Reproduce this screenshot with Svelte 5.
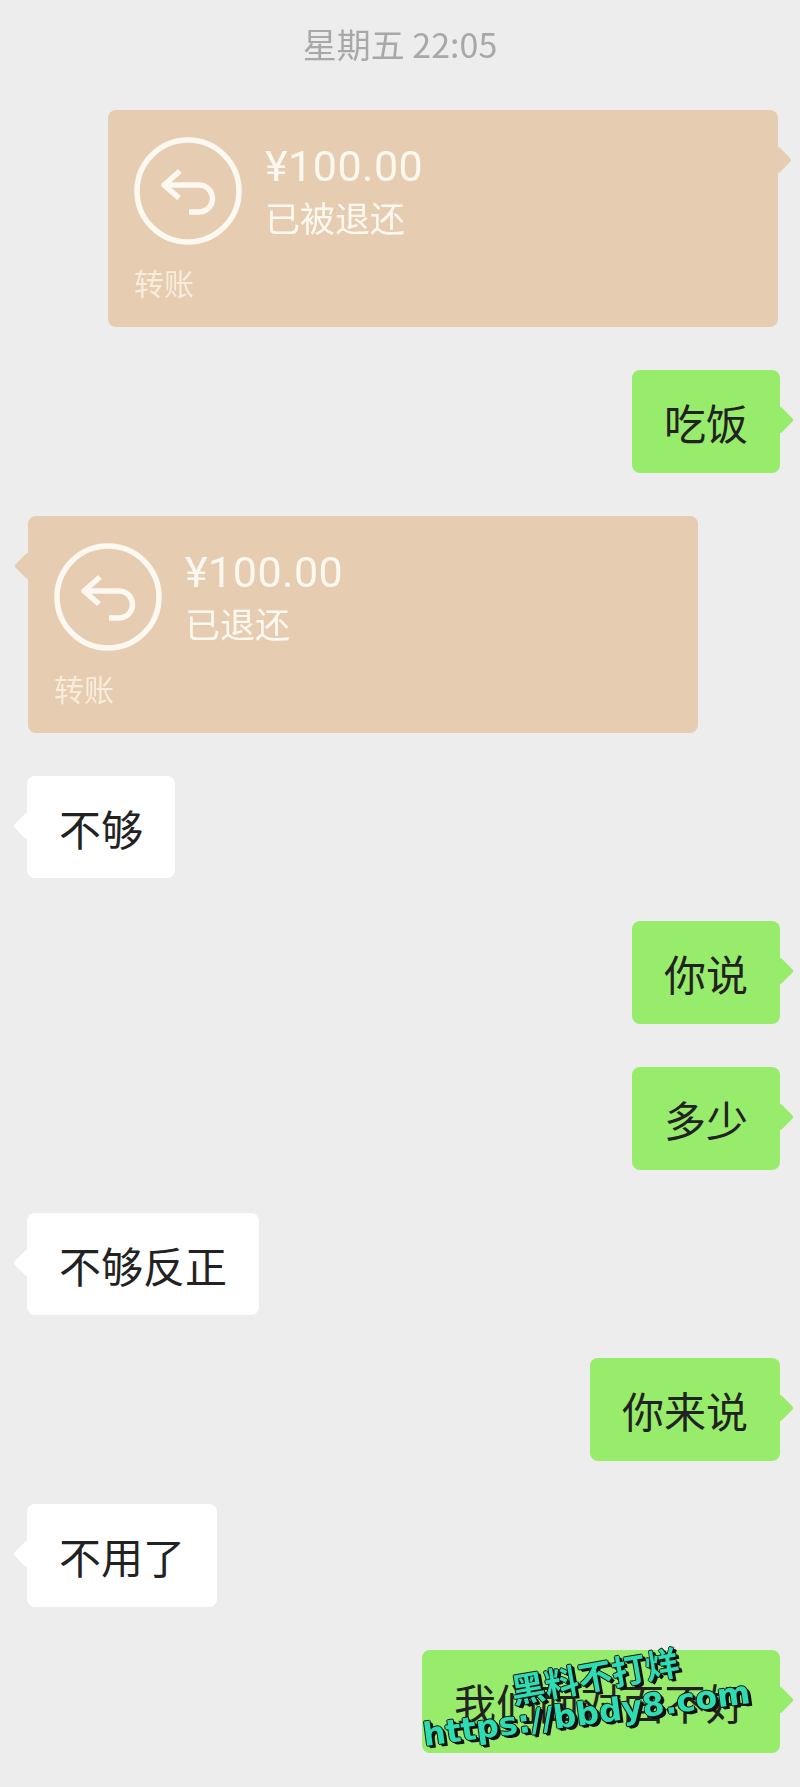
<script lang="ts">
  type Msg = { side: "left" | "right"; text: string };
  type Item = Msg | { side: "left" | "right"; refund: string };

  const items: Item[] = [
    { side: "right", refund: "已被退还" },
    { side: "right", text: "吃饭" },
    { side: "left", refund: "已退还" },
    { side: "left", text: "不够" },
    { side: "right", text: "你说" },
    { side: "right", text: "多少" },
    { side: "left", text: "不够反正" },
    { side: "right", text: "你来说" },
    { side: "left", text: "不用了" },
    { side: "right", text: "我们面对面不好" }
  ];
</script>

<div class="page">
  <div class="chat">
    <div class="time">星期五 22:05</div>
    <div class="list">
      {#each items as item}
        <div class="row {item.side}">
          {#if "refund" in item}
            <div class="bubble card">
              <div class="card-top">
                <svg class="icon" viewBox="0 0 108 108" fill="none" stroke="#fdf8f0" stroke-width="5.5">
                  <circle cx="54" cy="54" r="51" />
                  <path d="M46 34 L30 48 L45 61 M30 48 H65 A13.5 13.5 0 0 1 65 75 H55" stroke-linejoin="round" />
                </svg>
                <div class="card-info">
                  <div class="amount">¥100.00</div>
                  <div class="status">{item.refund}</div>
                </div>
              </div>
              <div class="card-label">转账</div>
            </div>
          {:else}
            <div class="bubble {item.side === 'right' ? 'green' : 'white'}">{item.text}</div>
          {/if}
        </div>
      {/each}
    </div>
  </div>

  <div class="mark mark-cn">黑料不打烊</div>
  <div class="mark mark-url">https://bbdy8.com</div>
</div>

<style>
  :global(body) {
    margin: 0;
    background: #ededed;
  }
  .page {
    position: relative;
    width: 800px;
    height: 1787px;
    overflow: hidden;
    background: #ededed;
    font-family: "Noto Sans CJK SC", sans-serif;
  }
  .chat {
    filter: blur(0.5px);
  }
  .time {
    height: 88px;
    padding-bottom: 22px;
    line-height: 88px;
    text-align: center;
    font-size: 34px;
    color: #a8a8a8;
  }
  .list {
    display: flex;
    flex-direction: column;
    gap: 43px;
  }
  .row {
    display: flex;
  }
  .row.left {
    justify-content: flex-start;
    padding-left: 27px;
  }
  .row.right {
    justify-content: flex-end;
    padding-right: 20px;
  }
  .bubble {
    position: relative;
    box-sizing: border-box;
    height: 102.7px;
    padding: 0 32px;
    display: flex;
    align-items: center;
    border-radius: 8px;
    font-size: 42px;
    color: #222;
  }
  .bubble::after {
    content: "";
    position: absolute;
    top: 40px;
    width: 20px;
    height: 20px;
    border-radius: 3px;
    background: inherit;
    transform: rotate(45deg);
  }
  .left .bubble::after {
    left: -10px;
  }
  .right .bubble::after {
    right: -10px;
  }
  .white {
    background: #fff;
  }
  .green {
    background: #98ec6b;
  }
  .card {
    width: 670px;
    height: 217px;
    padding: 27px 26px 0;
    display: block;
    background: #e6cdb1;
    color: #fdf8f0;
  }
  .right .card {
    margin-right: 2px;
  }
  .left .card {
    margin-left: 1px;
  }
  .card-top {
    display: flex;
    gap: 23px;
  }
  .icon {
    width: 108px;
    height: 108px;
    flex: none;
  }
  .card-info {
    padding-top: 2px;
  }
  .amount {
    font-family: Roboto, sans-serif;
    font-size: 43px;
    line-height: 55px;
    letter-spacing: 0.5px;
  }
  .status {
    font-size: 35px;
    line-height: 45px;
  }
  .card-label {
    margin-top: 15px;
    font-size: 30px;
    line-height: 44px;
    color: #f9ecdc;
  }
  .mark {
    position: absolute;
    white-space: nowrap;
    font-weight: 700;
    color: #2edcb2;
    text-shadow: 1px 0 0 #111, -1px 0 0 #111, 0 1px 0 #111, 0 -1px 0 #111, 2px 2px 0 #111, 3px 3px 0 #111;
    transform-origin: left center;
  }
  .mark-cn {
    left: 511px;
    top: 1668px;
    font-size: 34px;
    line-height: 44px;
    transform: rotate(-10deg);
  }
  .mark-url {
    left: 423px;
    top: 1713px;
    font-family: "DejaVu Sans", sans-serif;
    font-size: 32px;
    line-height: 44px;
    transform: rotate(-7.5deg);
  }
</style>
